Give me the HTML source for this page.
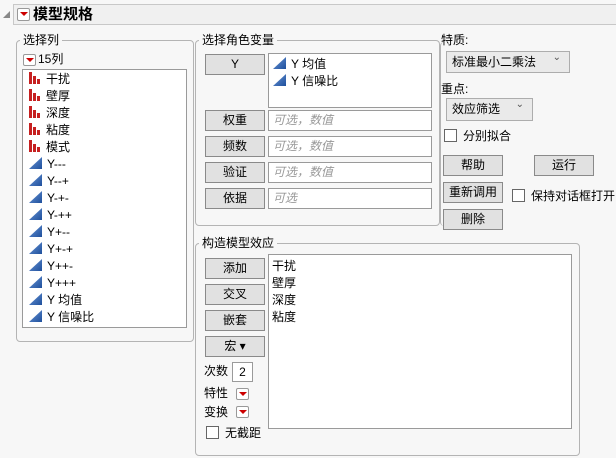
<!DOCTYPE html>
<html><head><meta charset="utf-8"><style>
body{margin:0;width:616px;height:458px;background:#f7f7f7;font-family:"Liberation Sans","Noto Sans CJK SC",sans-serif;font-size:12px;color:#000;position:relative;overflow:hidden}
.a{position:absolute}
.grp{position:absolute;border:1px solid #b4b4b4;border-radius:4px}
.gt{position:absolute;background:#f7f7f7;padding:0 3px;line-height:14px}
.btn{position:absolute;background:#e1e1e1;border:1px solid #8a8a8a;text-align:center;box-sizing:border-box;line-height:18px}
.box{position:absolute;background:#fff;border:1px solid #9a9a9a;box-sizing:border-box}
.ph{color:#999;font-style:italic;padding-left:4px;line-height:18px}
.rb{position:absolute;width:13px;height:12px;background:#fff;border:1px solid #999;box-sizing:border-box;border-radius:2px}
.rb:after{content:"";position:absolute;left:2px;top:3px;border-left:4px solid transparent;border-right:4px solid transparent;border-top:4px solid #c00}
.cb{position:absolute;width:13px;height:13px;background:#fff;border:1px solid #666;box-sizing:border-box}
.it{position:absolute;left:6px;height:17px;line-height:17px;white-space:nowrap}
.it i{display:inline-block;width:13px;height:12px;vertical-align:-1px;margin-right:5px}
.it i.bar{display:inline-flex;align-items:flex-end;gap:1px;width:12px}
.bar b{display:block;width:3px;background:#c62020}
.tri{background:linear-gradient(135deg,#6a98d8,#1f4f9c);clip-path:polygon(100% 0,100% 100%,0 100%)}
.dd{position:absolute;background:#eaeaea;border:1px solid #adadad;box-sizing:border-box;padding-left:5px;line-height:20px}
.dd:after{content:"⌄";position:absolute;right:8px;top:-4px;font-size:10px;color:#555}
</style></head><body>
<div class="a" style="left:3px;top:11px;width:0;height:0;border-left:7px solid transparent;border-bottom:7px solid #888"></div>
<div class="a" style="left:13px;top:4px;width:603px;height:21px;border:1px solid #c8c8c8;border-right:none;background:#f0f0f0;box-sizing:border-box"></div>
<div class="rb" style="left:17px;top:8px;width:13px;height:13px"></div>
<div class="a" style="left:33px;top:5px;font-size:15px;font-weight:bold;line-height:20px">模型规格</div>

<div class="grp" style="left:16px;top:40px;width:176px;height:300px"></div>
<div class="gt" style="left:20px;top:33px">选择列</div>
<div class="rb" style="left:23px;top:54px"></div>
<div class="a" style="left:38px;top:51px;line-height:16px">15列</div>
<div class="box" style="left:22px;top:69px;width:165px;height:259px">
<div class="it" style="top:1px"><i class="bar"><b style="height:12px"></b><b style="height:8px"></b><b style="height:5px"></b></i>干扰</div>
<div class="it" style="top:18px"><i class="bar"><b style="height:12px"></b><b style="height:8px"></b><b style="height:5px"></b></i>壁厚</div>
<div class="it" style="top:35px"><i class="bar"><b style="height:12px"></b><b style="height:8px"></b><b style="height:5px"></b></i>深度</div>
<div class="it" style="top:52px"><i class="bar"><b style="height:12px"></b><b style="height:8px"></b><b style="height:5px"></b></i>粘度</div>
<div class="it" style="top:69px"><i class="bar"><b style="height:12px"></b><b style="height:8px"></b><b style="height:5px"></b></i>模式</div>
<div class="it" style="top:86px"><i class="tri"></i>Y---</div>
<div class="it" style="top:103px"><i class="tri"></i>Y--+</div>
<div class="it" style="top:120px"><i class="tri"></i>Y-+-</div>
<div class="it" style="top:137px"><i class="tri"></i>Y-++</div>
<div class="it" style="top:154px"><i class="tri"></i>Y+--</div>
<div class="it" style="top:171px"><i class="tri"></i>Y+-+</div>
<div class="it" style="top:188px"><i class="tri"></i>Y++-</div>
<div class="it" style="top:205px"><i class="tri"></i>Y+++</div>
<div class="it" style="top:222px"><i class="tri"></i>Y 均值</div>
<div class="it" style="top:239px"><i class="tri"></i>Y 信噪比</div>
</div>

<div class="grp" style="left:195px;top:40px;width:243px;height:184px"></div>
<div class="gt" style="left:199px;top:33px">选择角色变量</div>
<div class="btn" style="left:205px;top:54px;width:60px;height:21px">Y</div>
<div class="box" style="left:268px;top:53px;width:164px;height:55px">
<div class="it" style="top:2px;left:4px"><i class="tri"></i>Y 均值</div>
<div class="it" style="top:19px;left:4px"><i class="tri"></i>Y 信噪比</div></div>
<div class="btn" style="left:205px;top:110px;width:60px;height:21px">权重</div>
<div class="box ph" style="left:268px;top:110px;width:164px;height:21px">可选，数值</div>
<div class="btn" style="left:205px;top:136px;width:60px;height:21px">频数</div>
<div class="box ph" style="left:268px;top:136px;width:164px;height:21px">可选，数值</div>
<div class="btn" style="left:205px;top:162px;width:60px;height:21px">验证</div>
<div class="box ph" style="left:268px;top:162px;width:164px;height:21px">可选，数值</div>
<div class="btn" style="left:205px;top:188px;width:60px;height:21px">依据</div>
<div class="box ph" style="left:268px;top:188px;width:164px;height:21px">可选</div>

<div class="a" style="left:440px;top:42px;width:4px;height:184px;border-left:1px solid #b4b4b4;border-radius:4px 0 0 4px"></div>
<div class="a" style="left:441px;top:31px">特质:</div>
<div class="dd" style="left:446px;top:51px;width:124px;height:22px">标准最小二乘法</div>
<div class="a" style="left:441px;top:80px">重点:</div>
<div class="dd" style="left:446px;top:98px;width:87px;height:23px">效应筛选</div>
<div class="cb" style="left:444px;top:129px"></div>
<div class="a" style="left:463px;top:127px">分别拟合</div>
<div class="btn" style="left:443px;top:155px;width:60px;height:21px">帮助</div>
<div class="btn" style="left:534px;top:155px;width:60px;height:21px">运行</div>
<div class="btn" style="left:443px;top:182px;width:60px;height:21px">重新调用</div>
<div class="cb" style="left:512px;top:189px"></div>
<div class="a" style="left:531px;top:187px">保持对话框打开</div>
<div class="btn" style="left:443px;top:209px;width:60px;height:21px">删除</div>

<div class="grp" style="left:195px;top:243px;width:383px;height:211px"></div>
<div class="gt" style="left:199px;top:236px">构造模型效应</div>
<div class="btn" style="left:205px;top:258px;width:60px;height:21px">添加</div>
<div class="btn" style="left:205px;top:284px;width:60px;height:21px">交叉</div>
<div class="btn" style="left:205px;top:310px;width:60px;height:21px">嵌套</div>
<div class="btn" style="left:205px;top:336px;width:60px;height:21px">宏 ▾</div>
<div class="box" style="left:268px;top:254px;width:304px;height:175px">
<div class="it" style="top:3px;left:3px">干扰</div>
<div class="it" style="top:20px;left:3px">壁厚</div>
<div class="it" style="top:37px;left:3px">深度</div>
<div class="it" style="top:54px;left:3px">粘度</div></div>
<div class="a" style="left:204px;top:362px">次数</div>
<div class="box" style="left:232px;top:362px;width:21px;height:20px;text-align:center;line-height:18px">2</div>
<div class="a" style="left:204px;top:384px">特性</div>
<div class="rb" style="left:236px;top:388px"></div>
<div class="a" style="left:204px;top:403px">变换</div>
<div class="rb" style="left:236px;top:406px"></div>
<div class="cb" style="left:206px;top:426px"></div>
<div class="a" style="left:225px;top:424px">无截距</div>
</body></html>
